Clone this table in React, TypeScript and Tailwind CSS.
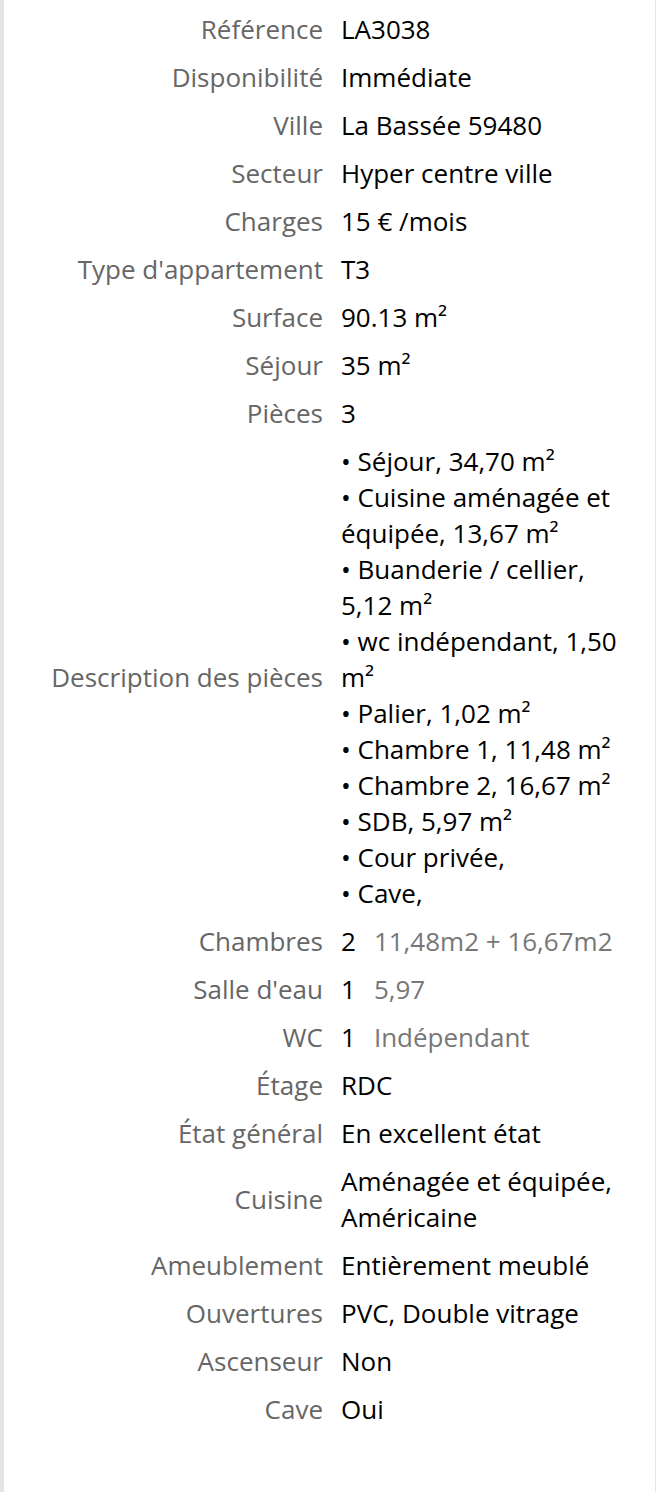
import React from "react";

type Row = {
  label: string;
  value: React.ReactNode;
};

const PIECES = [
  "• Séjour, 34,70 m²",
  "• Cuisine aménagée et équipée, 13,67 m²",
  "• Buanderie / cellier, 5,12 m²",
  "• wc indépendant, 1,50 m²",
  "• Palier, 1,02 m²",
  "• Chambre 1, 11,48 m²",
  "• Chambre 2, 16,67 m²",
  "• SDB, 5,97 m²",
  "• Cour privée,",
  "• Cave,",
];

const Extra = ({ n, note }: { n: string; note: string }) => (
  <span>
    {n}
    <span className="ml-[18px] text-[#777777]">{note}</span>
  </span>
);

const ROWS: Row[] = [
  { label: "Référence", value: "LA3038" },
  { label: "Disponibilité", value: "Immédiate" },
  { label: "Ville", value: "La Bassée 59480" },
  { label: "Secteur", value: "Hyper centre ville" },
  { label: "Charges", value: "15 € /mois" },
  { label: "Type d'appartement", value: "T3" },
  { label: "Surface", value: "90.13 m²" },
  { label: "Séjour", value: "35 m²" },
  { label: "Pièces", value: "3" },
  {
    label: "Description des pièces",
    value: (
      <div>
        {PIECES.map((p) => (
          <div key={p}>{p}</div>
        ))}
      </div>
    ),
  },
  { label: "Chambres", value: <Extra n="2" note="11,48m2 + 16,67m2" /> },
  { label: "Salle d'eau", value: <Extra n="1" note="5,97" /> },
  { label: "WC", value: <Extra n="1" note="Indépendant" /> },
  { label: "Étage", value: "RDC" },
  { label: "État général", value: "En excellent état" },
  { label: "Cuisine", value: "Aménagée et équipée, Américaine" },
  { label: "Ameublement", value: "Entièrement meublé" },
  { label: "Ouvertures", value: "PVC, Double vitrage" },
  { label: "Ascenseur", value: "Non" },
  { label: "Cave", value: "Oui" },
];

export default function App() {
  return (
    <div className="min-h-[1492px] w-[656px] bg-white border-l-4 border-l-[#e3e5e3] border-r border-r-[#e6e6e6] font-['Open_Sans',sans-serif] text-[26px] leading-[36px]">
      <div className="pt-[5px]">
        {ROWS.map((r) => (
          <div key={r.label} className="flex items-center py-[6px]">
            <div className="w-[319px] shrink-0 text-right text-[#666666]">{r.label}</div>
            <div className="ml-[18px] w-[292px] text-black">{r.value}</div>
          </div>
        ))}
      </div>
    </div>
  );
}
